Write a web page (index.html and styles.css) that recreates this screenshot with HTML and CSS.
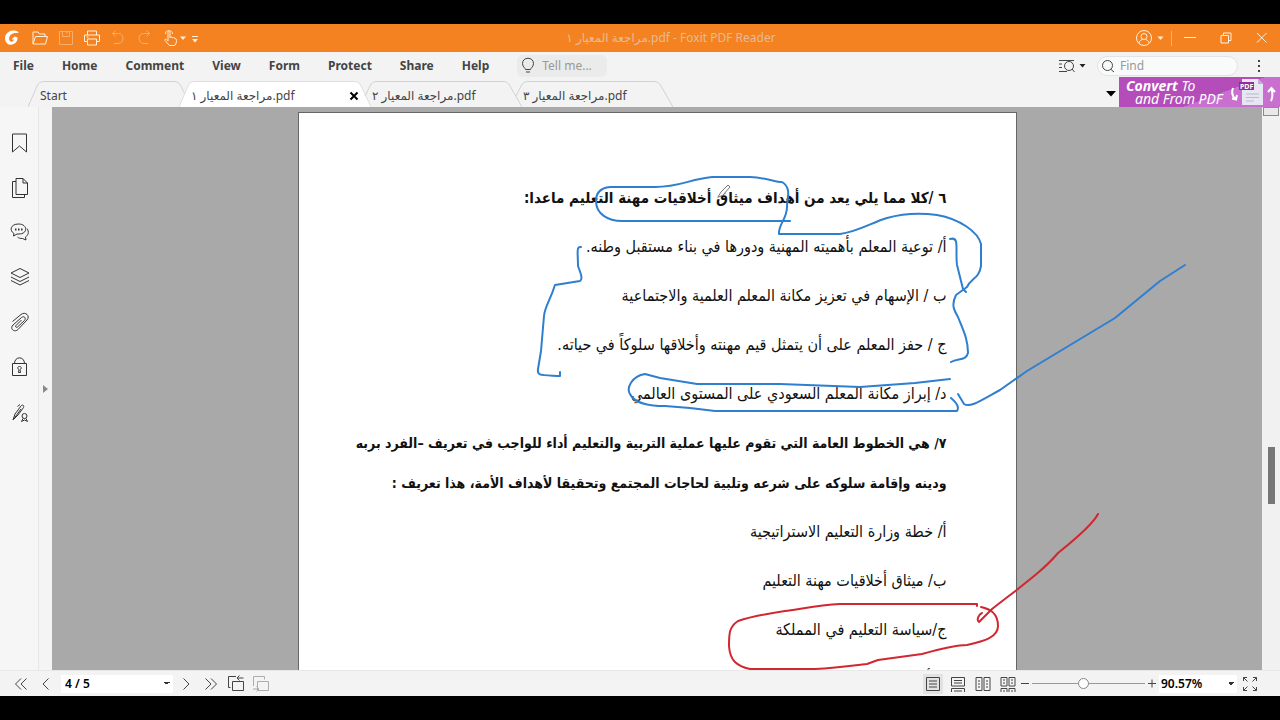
FILE: index.html
```html
<!DOCTYPE html>
<html lang="en">
<head>
<meta charset="utf-8">
<title>مراجعة المعيار ١.pdf - Foxit PDF Reader</title>
<link rel="stylesheet" href="styles.css">
</head>
<body>
<div class="app">
  <header class="titlebar">
    <div class="quick">
      <svg class="logo" viewBox="0 0 18 18" width="18" height="18" aria-label="Foxit"><path fill="#fff" d="M16 3.500C12 .5 6 1 3 5.500C.5 10 3 15.500 7.500 15.700C12 15.800 15 12 14.500 8.500L11.500 7.500L8.500 10.500L11 10.500C10.500 12.500 8.500 13.300 7 12C5 10 6.500 5.500 10 4.500C12 3.800 14.500 4 16 3.500Z"/></svg>
      <button aria-label="Open"><svg viewBox="0 0 18 18" width="18" height="18"><path d="M2 15V3h5l1.500 2H14v2.500M2 15L4.500 7.500H16.500L14.500 15Z"/></svg></button>
      <button class="dim" aria-label="Save"><svg viewBox="0 0 18 18" width="18" height="18"><path d="M2.500 2.500h13v13h-13ZM5.500 2.500v5h7v-5M9 4h2"/></svg></button>
      <button aria-label="Print"><svg viewBox="0 0 18 18" width="18" height="18"><path d="M4.500 6V2h9v4M4 12.500H1.500V6h15v6.500H14M4.500 10h9v6h-9ZM3.500 8h2"/></svg></button>
      <button class="dim" aria-label="Undo"><svg viewBox="0 0 18 18" width="18" height="18"><path d="M6.500 1.500L3.500 4.500L6.500 7.500M3.500 4.500H9.500C15.500 4.500 15.500 14.500 9 14.500H5"/></svg></button>
      <button class="dim" aria-label="Redo"><svg viewBox="0 0 18 18" width="18" height="18"><path d="M11.500 1.500L14.500 4.500L11.500 7.500M14.500 4.500H8.500C2.500 4.500 2.500 14.500 9 14.500H13"/></svg></button>
      <button aria-label="Hand tool"><svg viewBox="0 0 30 18" width="30" height="18"><path d="M7 12V3.500C7 2 9 2 9 3.500V9M9 8.500C10 7.500 11.500 8 11.500 9C12.500 8 14 8.500 14 10C15 9.500 15.500 10 15.500 11.500C15.500 14 14.500 16.500 13 16.500H8.500L4 11.500C3.500 10 5 9.500 7 12M4.500 5C4 .5 11.500 .5 11.500 5"/><path class="solid" d="M19 7.500h6l-3 3.500Z"/></svg></button>
      <button class="more" aria-label="Customize toolbar"><svg viewBox="0 0 8 18" width="8" height="18"><path d="M1 7.500h6"/><path class="solid" d="M1 10h6l-3 3.500Z"/></svg></button>
    </div>
    <h1>مراجعة المعيار ١.pdf - Foxit PDF Reader</h1>
    <div class="winctl">
      <button aria-label="Account"><svg viewBox="0 0 30 18" width="30" height="18"><circle cx="9" cy="9" r="7.500"/><circle cx="9" cy="7.500" r="3"/><path d="M4 14C4.500 11.500 6 11 7.500 10.500M14 14C13.500 11.500 12 11 10.500 10.500"/><path class="solid" d="M22.500 7.500h6l-3 3.500Z"/></svg></button>
      <span class="sep"></span>
      <button class="wide" aria-label="Minimize"><svg viewBox="0 0 12 12" width="12" height="12"><path d="M0 5.500h12"/></svg></button>
      <button class="wide" aria-label="Restore"><svg viewBox="0 0 12 12" width="12" height="12"><path d="M1 3.500h7.500v7.500H1ZM3.500 3.500V1H11v7.500H8.500"/></svg></button>
      <button class="wide" aria-label="Close"><svg viewBox="0 0 12 12" width="12" height="12"><path d="M1 1L10.500 10.500M10.500 1L1 10.500"/></svg></button>
    </div>
  </header>

  <nav class="menubar">
    <button>File</button><button>Home</button><button>Comment</button><button>View</button><button>Form</button><button>Protect</button><button>Share</button><button>Help</button>
    <label class="tell"><svg viewBox="0 0 16 18" width="16" height="18"><path d="M5.500 12.500C5.500 11 2.500 10 2.500 6.500C2.500 -.5 13.500 -.5 13.500 6.500C13.500 10 10.500 11 10.500 12.500ZM6 15h4"/></svg><input type="text" placeholder="Tell me..." aria-label="Tell me"></label>
    <div class="findarea">
      <button class="advanced" aria-label="Advanced search"><svg viewBox="0 0 28 16" width="28" height="16"><path d="M1 2.500h15M1 6h3M1 9.500h3M1 13.500h8"/><circle cx="11" cy="8" r="4.500"/><path d="M14 11l2.500 3"/><path fill="#222" stroke="none" d="M21.500 6h6l-3 3.500Z"/></svg></button>
      <label class="find"><svg viewBox="0 0 14 14" width="14" height="14"><circle cx="6.500" cy="6.500" r="5"/><path d="M10 10.500L13 13"/></svg><input type="text" placeholder="Find" aria-label="Find"></label>
      <button class="dots" aria-label="More"><svg viewBox="0 0 4 14" width="4" height="14"><path fill="#444" stroke="none" d="M1 1h2v2H1ZM1 6h2v2H1ZM1 11h2v2H1Z"/></svg></button>
    </div>
  </nav>

  <div class="tabbar">
    <div class="tabs">
      <button class="tab start"><svg class="shape" viewBox="0 0 160 26" preserveAspectRatio="none"><path d="M0 26L9 5Q11 .5 16 .5H147Q151 .5 153 5L160 20"/></svg><span>Start</span></button>
      <button class="tab active"><svg class="shape" viewBox="0 0 194 26" preserveAspectRatio="none"><path d="M0 26L9 5Q11 .5 16 .5H178Q182 .5 184 5L194 26"/></svg><span>مراجعة المعيار ١.pdf</span><svg class="x" viewBox="0 0 10 10" width="10" height="10"><path d="M1.500 1.500l7 7M8.500 1.500l-7 7"/></svg></button>
      <button class="tab doc"><svg class="shape" viewBox="0 0 160 26" preserveAspectRatio="none"><path d="M3 15L8 5Q10 .5 15 .5H141Q146 .5 148 5L160 26"/></svg><span>مراجعة المعيار ٢.pdf</span></button>
      <button class="tab doc"><svg class="shape" viewBox="0 0 160 26" preserveAspectRatio="none"><path d="M3 15L8 5Q10 .5 15 .5H141Q146 .5 148 5L160 26"/></svg><span>مراجعة المعيار ٣.pdf</span></button>
    </div>
    <button class="tablist" aria-label="Tab list"><svg viewBox="0 0 10 6" width="10" height="6"><path fill="#000" stroke="none" d="M0 0h10L5 5.500Z"/></svg></button>
    <a class="promo" href="#">
      <span class="promotext"><span><b>Convert</b> To</span><span class="second">and From PDF</span></span>
      <svg viewBox="0 0 50 30" width="50" height="30"><path fill="#e9e6f3" stroke="none" d="M12 2h16l5 5v21H12Z"/><path fill="#b9b2cc" stroke="none" d="M28 2v5h5Z"/><path stroke="#aebfd0" d="M16 17h13M16 20.500h13M16 24h8"/><path fill="#8f2f9b" stroke="none" d="M9 5h15v8H9Z"/><text x="10" y="12" class="pdf">PDF</text><path class="arrow" d="M3 11C1.500 15 2 19 5.500 22M2 21.500L6 22.500L7 18M41 24C43 20 43 17 41.500 12M38 15L41.500 11L45 15"/></svg>
    </a>
  </div>

  <main class="work">
    <aside class="side">
      <button aria-label="Bookmarks"><svg viewBox="0 0 20 22" width="20" height="22"><path d="M2.500 2h14v18l-7-6l-7 6Z"/></svg></button>
      <button aria-label="Pages"><svg viewBox="0 0 20 22" width="20" height="22"><path d="M6 1.500h7l4.500 4.500v11.500H6ZM13 1.500V6h4.500M6 4.500H2.500v16h12v-3"/></svg></button>
      <button aria-label="Comments"><svg viewBox="0 0 20 22" width="20" height="22"><path d="M3.500 14L4 11.500C-1 8.500 .5 2 8.500 2C18 2 18 12 9 12H7ZM17 6.500C19.500 10 18 13.500 15.500 15L16 18L12.500 16.500C10 16.500 8.500 16 7.500 15"/><path stroke-width="2" d="M5 7.500h1.500M8 7.500h1.500M11 7.500h1.500"/></svg></button>
      <button aria-label="Layers"><svg viewBox="0 0 20 22" width="20" height="22"><path d="M10 1.500L19 6L10 10.500L1 6ZM1 10L10 14.500L19 10M1 13.500L10 18L19 13.500"/></svg></button>
      <button aria-label="Attachments"><svg viewBox="0 0 20 22" width="20" height="22"><path d="M2.500 9.500L11 2.500C15.500 -1 20.500 4 17 8L8 17.500C4 21 -.5 16.500 3 13L11.500 5.500C14 3.500 16.500 6 14.500 8.500L7.500 15C6 16 5 14.500 6 13.500L11.500 8"/></svg></button>
      <button aria-label="Security"><svg viewBox="0 0 20 22" width="20" height="22"><path d="M2.500 6.500h14v12h-14ZM4.500 6.500C4.500 -1 14.500 -1 14.500 6.500M8.500 15.500L9 12.500C7 11.500 7.500 9.500 9.500 9.500C11.500 9.500 12 11.500 10 12.500L10.500 15.500Z"/></svg></button>
      <button aria-label="Signatures"><svg viewBox="0 0 20 22" width="20" height="22"><path d="M3 18L5 12L11 4C12.500 2 14.500 3.500 13.500 5.500L8 13ZM3 18L11 7M7.500 4.500L10 2.500"/><circle cx="14.500" cy="14" r="2.500"/><path d="M13 16.500L11.500 19.500L14.500 18L17.500 19.500L16 16.500"/></svg></button>
    </aside>
    <button class="expand" aria-label="Expand panel"><svg viewBox="0 0 5 8" width="5" height="8"><path fill="#8a8a8a" stroke="none" d="M0 0v8l5-4Z"/></svg></button>
    <section class="canvas">
      <article class="page" lang="ar" dir="rtl">
        <h2>٦ /كلا مما يلي يعد من أهداف ميثاق أخلاقيات مهنة التعليم ماعدا:</h2>
        <p>أ/ توعية المعلم بأهميته المهنية ودورها في بناء مستقبل وطنه.</p>
        <p>ب / الإسهام في تعزيز مكانة المعلم العلمية والاجتماعية</p>
        <p>ج / حفز المعلم على أن يتمثل قيم مهنته وأخلاقها سلوكاً في حياته.</p>
        <p>د/ إبراز مكانة المعلم السعودي على المستوى العالمي</p>
        <h2 class="long">٧/ هي الخطوط العامة التي تقوم عليها عملية التربية والتعليم أداء للواجب في تعريف –الفرد بربه<br>ودينه وإقامة سلوكه على شرعه وتلبية لحاجات المجتمع وتحقيقا لأهداف الأمة، هذا تعريف :</h2>
        <p>أ/ خطة وزارة التعليم الاستراتيجية</p>
        <p>ب/ ميثاق أخلاقيات مهنة التعليم</p>
        <p>ج/سياسة التعليم في المملكة</p>
        <p>د/ أهداف التعليم</p>
        <svg class="ink" viewBox="299 112 718 558" width="718" height="558" aria-hidden="true">
          <g stroke="#2e7fd0">
            <path d="M790 220H622C608 220 596 213 596 200C596 192 600 187 610 186H655C680 186 690 178 712 176H750C768 177 775 181 782 181C792 187 787 198 787 206C787 218 778 224 779 233H840C857 231 873 221 887 217C905 212 922 212 937 214C960 218 978 231 981 243V265C979 278 971 277 967 286L956 294C951 304 954 309 958 316C963 329 968 338 968 352C966 360 958 357 951 361"/>
            <path d="M950 238C960 235 955 249 957 264L963 288L966 291"/>
            <path d="M581 246C576 245 578 253 578 265C581 273 583 278 580 280L555 284C550 300 545 305 544 315L541 350L538 368C537 375 540 374 560 375V371"/>
            <path d="M950 378L915 382L860 386L780 383H697L660 377L645 373C632 375 626 387 630 393C634 402 650 405 665 405L690 407L715 410H957C959 407 957 402 951 397"/>
            <path d="M958 393L964 403C970 407 980 400 1000 389L1027 370L1115 317L1160 280L1185 264"/>
          </g>
          <g stroke="#d22630">
            <path d="M977 605V603H840C820 604 800 608 785 610C765 613 750 616 738 620C729 626 729 633 729 645C730 660 737 665 750 668H815C835 667 850 665 867 663L878 659L922 653C940 648 955 644 967 644C985 640 998 636 998 625C998 612 990 608 981 606"/>
            <path d="M1098 513C1094 521 1083 532 1058 552C1042 571 1020 586 992 608L979 621C976 619 979 613 982 612"/>
          </g>
          <path class="cursor" d="M718 196L721 191L728 184L730 186L723 194Z"/>
        </svg>
      </article>
    </section>
    <div class="scroll" aria-hidden="true"><div class="cap"></div><div class="thumb"></div></div>
  </main>

  <footer class="status">
    <button aria-label="First page"><svg viewBox="0 0 14 12" width="14" height="12"><path d="M7 .5L1.500 6L7 11.500M12.500 .5L7 6L12.500 11.500"/></svg></button>
    <button aria-label="Previous page"><svg viewBox="0 0 14 12" width="14" height="12"><path d="M9.500 .5L4 6L9.500 11.500"/></svg></button>
    <select class="pageno" aria-label="Page"><option>4 / 5</option></select>
    <button aria-label="Next page"><svg viewBox="0 0 14 12" width="14" height="12"><path d="M4.500 .5L10 6L4.500 11.500"/></svg></button>
    <button aria-label="Last page"><svg viewBox="0 0 14 12" width="14" height="12"><path d="M1.500 .5L7 6L1.500 11.500M7 .5L12.500 6L7 11.500"/></svg></button>
    <div class="history">
      <button aria-label="Previous view"><svg viewBox="0 0 18 18" width="18" height="18"><path d="M5.500 6.500h11v9h-11ZM3.500 12.500H1.500V1.500H9M16.500 3H10M12.500 .5L10 3L12.500 5.500"/></svg></button>
      <button class="off" aria-label="Next view"><svg viewBox="0 0 18 18" width="18" height="18"><path d="M5.500 6.500h11v9h-11ZM1.500 11V1.500h11v3M1 14h6M4.500 11.500L7 14L4.500 16.500"/></svg></button>
    </div>
    <div class="views">
      <button class="on" aria-label="Single page"><svg viewBox="0 0 16 16" width="16" height="16"><path d="M1.500 1.500h13v13h-13ZM4 5h8M4 8h8M4 11h8"/></svg></button>
      <button aria-label="Continuous"><svg viewBox="0 0 16 16" width="16" height="16"><path d="M1.500 1.500h13v8.500h-13ZM4 4.500h8M4 7h8M1.500 16v-3.500h13V16M4 15h8"/></svg></button>
      <button aria-label="Facing"><svg viewBox="0 0 16 16" width="16" height="16"><path d="M1 1.500h6v13H1ZM9 1.500h6v13H9ZM3 5h2M3 8h2M3 11h2M11 5h2M11 8h2M11 11h2"/></svg></button>
      <button aria-label="Continuous facing"><svg viewBox="0 0 16 16" width="16" height="16"><path d="M1 1.500h6v8.500H1ZM9 1.500h6v8.500H9ZM3 4h2M3 7h2M11 4h2M11 7h2M1 16v-3.500h6V16M9 16v-3.500h6V16M3 15h2M11 15h2"/></svg></button>
    </div>
    <div class="zoomer">
      <button aria-label="Zoom out"><svg viewBox="0 0 10 10" width="10" height="10"><path d="M1 4.500h8"/></svg></button>
      <input class="slider" type="range" min="0" max="100" value="45" aria-label="Zoom">
      <button aria-label="Zoom in"><svg viewBox="0 0 10 10" width="10" height="10"><path d="M1 4.500h8M5 .5v8"/></svg></button>
      <select class="zoom" aria-label="Zoom level"><option>90.57%</option></select>
    </div>
    <button aria-label="Full screen"><svg viewBox="0 0 16 16" width="16" height="16"><path d="M1.500 5V1.500H5M1.500 1.500L5.500 5.500M11 1.500h3.500V5M14.500 1.500L10.500 5.500M1.500 11v3.500H5M1.500 14.500L5.500 10.500M11 14.500h3.500V11M14.500 14.500L10.500 10.500"/></svg></button>
  </footer>
</div>
</body>
</html>
```

FILE: styles.css
```css
* { box-sizing: border-box; }
body { margin: 0; background: #000; font: 12px/16px "Noto Sans", "DejaVu Sans", sans-serif; color: #444; }
button, input, select { font: inherit; color: inherit; border: 0; margin: 0; padding: 0; background: none; }
svg { display: block; flex: none; fill: none; stroke: #444; }
.app { height: 100vh; padding: 24px 0; display: flex; flex-direction: column; }

.titlebar { height: 28px; flex: none; display: grid; grid-template-columns: 1fr auto 1fr; align-items: center; background: #f58220; }
.titlebar svg { stroke: #fff0dc; }
.titlebar .logo, .titlebar .solid { stroke: none; }
.titlebar .solid { fill: #fff0dc; }
.titlebar h1 { margin: 0; padding-left: 62px; font-size: 12px; font-weight: 400; color: #e3bb98; }
.quick { display: flex; align-items: center; gap: 8px; padding-left: 3px; }
.logo { margin-right: 2px; }
.quick .dim { opacity: .4; }
.more { margin-left: -8px; }
.winctl { display: flex; align-items: center; justify-content: flex-end; }
.sep { width: 1px; height: 15px; background: #f9b173; margin: 0 0 0 6px; }
.wide { width: 36px; display: flex; justify-content: center; }

.menubar { height: 29px; flex: none; display: flex; align-items: center; gap: 28px; padding: 0 0 2px 13px; background: #f3f3f3; font-weight: 700; }
.tell { display: flex; align-items: center; gap: 6px; width: 90px; height: 22px; padding-left: 3px; background: #ebebeb; border-radius: 6px; font-weight: 400; }
.tell input, .find input { width: 100%; min-width: 0; outline: 0; }
::placeholder { color: #999; opacity: 1; }
.findarea { margin-left: auto; display: flex; align-items: center; gap: 11px; padding-right: 19px; font-weight: 400; }
.find { display: flex; align-items: center; gap: 5px; width: 141px; height: 20px; padding: 0 3px; border: 1px solid #e3e3e3; border-radius: 10px; background: #f9fafa; }
.dots { margin-left: 8px; }

.tabbar { height: 26px; flex: none; display: flex; align-items: center; background: #f3f3f3; }
.tabs { display: flex; height: 26px; padding-left: 28px; flex: 1; }
.tab { position: relative; display: flex; align-items: center; text-align: left; padding: 4px 12px 0; white-space: nowrap; }
.tab span { position: relative; }
.shape { position: absolute; inset: 0; width: 100%; height: 100%; stroke: #d2d2d2; }
.start { width: 160px; }
.active { width: 192px; margin-left: -9px; justify-content: space-between; }
.active .shape { fill: #fff; stroke: #dedede; }
.x { position: relative; stroke: #000; stroke-width: 2; }
.doc { width: 160px; margin-left: -9px; padding-left: 10px; }
.tablist { margin-right: 3px; }
.promo { width: 161px; height: 30px; margin-top: -4px; align-self: flex-start; display: flex; align-items: center; justify-content: space-between; padding-left: 7px; background: linear-gradient(160deg, #b44dba 0 60%, #c86fd0 60%); color: #fff; font-size: 14px; font-style: italic; line-height: 13px; text-decoration: none; }
.promotext { display: flex; flex-direction: column; white-space: nowrap; }
.second { padding-left: 9px; }
.pdf { font: 700 7px "Noto Sans", sans-serif; fill: #fff; stroke: none; }
.arrow { stroke: #fff; stroke-width: 2; }

.work { flex: 1; min-height: 0; display: flex; background: #a9a9a9; }
.side { width: 39px; display: flex; flex-direction: column; align-items: center; gap: 23px; padding: 25px 0 0 1px; background: #f6f6f6; border-right: 1px solid #e6e6e6; }
.side svg { stroke: #333; }
.expand { width: 13px; display: flex; align-items: center; justify-content: center; background: #f4f4f4; }
.canvas { flex: 1; min-width: 0; overflow: hidden; padding-top: 5px; display: flex; justify-content: center; align-items: flex-start; }
.page { position: relative; flex: 0 1 719px; min-width: 0; min-height: 100%; padding: 65px 69px 40px 0; background: #fff; border: 1px solid #666; border-bottom: 0; display: flex; flex-direction: column; gap: 9px; color: #111; font-family: "DejaVu Sans Condensed", "DejaVu Sans", sans-serif; font-size: 16px; line-height: 40px; white-space: nowrap; }
.page h2, .page p { margin: 0; }
.page h2 { font-size: 15px; }
.page .long { font-size: 14px; }
.ink { position: absolute; left: 0; top: 0; overflow: visible; stroke-width: 2; stroke-linecap: round; stroke-linejoin: round; }
.cursor { fill: #fff; stroke: #777; stroke-width: 1; }
.scroll { width: 18px; background: #f1f1f1; display: flex; flex-direction: column; align-items: center; }
.cap { width: 16px; height: 9px; border: 1px solid #8d8d8d; background: #e8e8e8; }
.thumb { width: 7px; height: 57px; margin-top: 331px; background: #777; }

.status { height: 26px; flex: none; display: flex; align-items: center; gap: 11px; padding: 0 22px 0 14px; background: #f3f3f3; border-top: 1px solid #e8e8e8; }
select { appearance: none; height: 18px; color: #000; font-weight: 600; background-color: #fff; background-image: linear-gradient(to bottom left, #333 50%, transparent 50%), linear-gradient(to bottom right, #333 50%, transparent 50%); background-size: 3px 3px; background-position: right 6px center, right 3px center; background-repeat: no-repeat; }
.pageno { width: 112px; padding-left: 4px; margin: 0 -5px 0 -3px; }
.history { display: flex; gap: 7px; margin-left: -2px; }
.off { opacity: .4; }
.views { margin-left: auto; display: flex; gap: 5px; }
.views button { padding: 2px; }
.views .on { background: #e2e2e2; }
.zoomer { display: flex; align-items: center; gap: 2px; margin: 0 -6px 0 -9px; }
.slider { appearance: none; width: 113px; height: 14px; }
.slider::-webkit-slider-runnable-track { height: 1px; background: #999; }
.slider::-webkit-slider-thumb { appearance: none; width: 11px; height: 11px; margin-top: -5px; border: 1px solid #888; border-radius: 50%; background: #fff; }
.zoom { width: 78px; padding-left: 2px; }
```
